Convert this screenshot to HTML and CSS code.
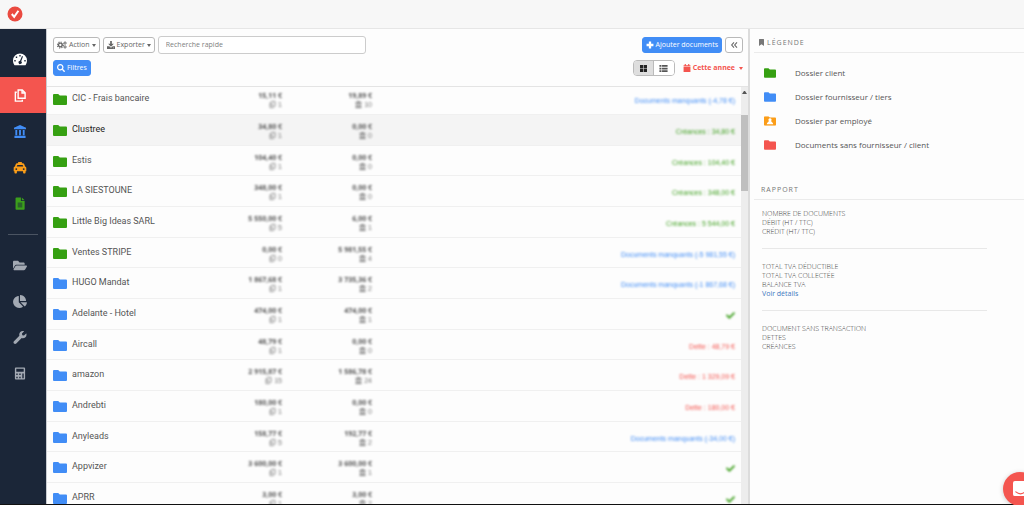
FILE: index.html
```html
<!DOCTYPE html>
<html lang="fr">
<head>
<meta charset="utf-8">
<title>Documents</title>
<link rel="stylesheet" href="styles.css">
</head>
<body>
<svg class="defs" aria-hidden="true">
  <symbol id="folder" viewBox="0 0 14 11"><path d="M1 0h4.2l1.6 1.5H13a1 1 0 0 1 1 1V10a1 1 0 0 1-1 1H1a1 1 0 0 1-1-1V1a1 1 0 0 1 1-1z"/></symbol>
  <symbol id="check" viewBox="0 0 512 512"><path d="M173.898 439.404l-166.4-166.4c-9.997-9.997-9.997-26.206 0-36.204l36.203-36.204c9.997-9.998 26.207-9.998 36.204 0L192 312.69 432.095 72.596c9.997-9.997 26.207-9.997 36.204 0l36.203 36.204c9.997 9.997 9.997 26.206 0 36.204l-294.4 294.401c-9.998 9.997-26.207 9.997-36.204-.001z"/></symbol>
  <symbol id="clip" viewBox="0 0 14 14"><path d="M2 4l3-3h7v9l-3 3H2zM5 4v5h4" fill="none" stroke="currentColor" stroke-width="1.6"/></symbol>
  <symbol id="bank" viewBox="0 0 14 14"><path d="M7 0l6.500 3v1.500H.5V3zM2 5.500h2V11H2zM6 5.500h2V11H6zM10 5.500h2V11h-2zM1 11.500h12V14H1z"/></symbol>
</svg>

<header class="topbar">
  <a class="logo" href="#" aria-label="Accueil">
    <svg viewBox="0 0 16 16"><circle cx="8" cy="8" r="7.500" fill="#ea4a40"/><path d="M4.800 8l2.400 2.800L11.400 4.800" fill="none" stroke="#fff" stroke-width="2"/></svg>
  </a>
</header>

<div class="layout">
  <nav class="sidebar">
    <a class="nav white" href="#" aria-label="Tableau de bord"><svg viewBox="0 0 14 12"><path fill-rule="evenodd" d="M7 0a7 7 0 0 1 7 7c0 1.600-.4 3-1.200 4.300-.2.400-.5.500-.9.500H2.100c-.4 0-.7-.1-.9-.5A7.500 7.500 0 0 1 0 7a7 7 0 0 1 7-7zM6.300 1.500v1.400h1.400V1.500zM2.800 3v1.400h1.400V3zM1.300 6.500v1.400h1.400V6.500zM11.300 6.500v1.400h1.400V6.500zM9 2.600L7 7.300a1.600 1.600 0 1 0 1.200.4l1.800-4.700z"/></svg></a>
    <a class="nav white active" href="#" aria-label="Documents"><svg viewBox="0 0 14 14"><g fill="none" stroke="currentColor" stroke-width="1.500"><path d="M5 1h4.500l3 3v6H5zM9.200 1.200v3.100h3.200M3.500 3.500H2V13h7.500v-1.500"/></g></svg></a>
    <a class="nav blue" href="#" aria-label="Banque"><svg viewBox="0 0 14 14"><use href="#bank"/></svg></a>
    <a class="nav orange" href="#" aria-label="Déplacements"><svg viewBox="0 0 14 14"><path fill-rule="evenodd" d="M5 1h4v1.500h1.200c.7 0 1.100.4 1.400 1L12.500 6c.8.200 1.300.8 1.300 1.600V11H13v1.500a.9.900 0 0 1-.9.900h-.9a.9.900 0 0 1-.9-.9V11H3.700v1.500a.9.900 0 0 1-.9.900h-.9a.9.900 0 0 1-.9-.9V11H.2V7.600C.2 6.800.7 6.200 1.500 6l.9-2.500c.3-.6.700-1 1.400-1H5zM4.200 4.200L3.500 6h7l-.7-1.800zM3 7.700a1 1 0 1 0 0 2 1 1 0 0 0 0-2zM11 7.700a1 1 0 1 0 0 2 1 1 0 0 0 0-2z"/></svg></a>
    <a class="nav green" href="#" aria-label="Factures"><svg viewBox="0 0 14 14"><path fill-rule="evenodd" d="M3 .5h5v3.700h4V13a.8.800 0 0 1-.8.800H3a.8.800 0 0 1-.8-.8V1.300A.8.800 0 0 1 3 .5zM9 .5l3 2.900H9zM4.500 6.200v.9h5v-.9zM4.500 8.200v.9h5v-.9zM4.500 10.200v.9h5v-.9z"/></svg></a>
    <hr class="nav-rule">
    <a class="nav" href="#" aria-label="Dossiers"><svg viewBox="0 0 576 512"><path d="M572.694 292.093L500.270 416.248A63.997 63.997 0 0 1 444.989 448H45.025c-18.523 0-30.064-20.093-20.731-36.093l72.424-124.155A64 64 0 0 1 152 256h399.964c18.523 0 30.064 20.093 20.730 36.093zM152 224h328v-48c0-26.510-21.490-48-48-48H272l-64-64H48C21.490 64 0 85.490 0 112v278.046l69.077-118.418C86.214 242.250 117.989 224 152 224z"/></svg></a>
    <a class="nav" href="#" aria-label="Statistiques"><svg viewBox="0 0 544 512"><path d="M527.790 288H290.500l158.030 158.030c6.040 6.040 15.980 6.530 22.190.680 38.700-36.460 65.320-85.610 73.130-140.860 1.340-9.460-6.510-17.850-16.060-17.850zm-15.830-64.800C503.720 103.740 408.260 8.280 288.800.040 279.680-.590 272 7.100 272 16.240V240h223.770c9.140 0 16.820-7.680 16.190-16.800zM224 288V50.710c0-9.550-8.390-17.400-17.840-16.060C86.990 51.490-4.100 155.600.140 280.370 4.500 408.510 114.830 513.590 243.030 511.980c50.400-.630 96.970-16.870 135.260-44.030 7.900-5.600 8.420-17.230 1.570-24.080L224 288z"/></svg></a>
    <a class="nav" href="#" aria-label="Réglages"><svg viewBox="0 0 512 512"><path d="M507.730 109.100c-2.240-9.030-13.540-12.090-20.120-5.510l-74.360 74.360-67.880-11.310-11.310-67.880 74.360-74.360c6.620-6.620 3.430-17.900-5.660-20.160-47.380-11.740-99.550.910-136.580 37.930-39.640 39.640-50.550 97.100-34.050 147.200L18.740 402.760c-24.990 24.990-24.990 65.510 0 90.500 24.990 24.990 65.510 24.990 90.500 0l213.210-213.210c50.120 16.710 107.470 5.680 147.370-34.220 37.070-37.070 49.700-89.320 37.910-136.730z"/></svg></a>
    <a class="nav" href="#" aria-label="Calculatrice"><svg viewBox="0 0 14 14"><path fill-rule="evenodd" d="M2.500 .5h9a1 1 0 0 1 1 1v11a1 1 0 0 1-1 1h-9a1 1 0 0 1-1-1v-11a1 1 0 0 1 1-1zM3 2v3h8V2zM3 7v1.500h1.500V7zM6.200 7v1.500h1.500V7zM9.500 7v5H11V7zM3 10.500V12h1.500v-1.500zM6.200 10.500V12h1.500v-1.500z"/></svg></a>
  </nav>

  <main class="main">
    <div class="toolbar">
      <div class="bar">
        <button class="btn" type="button"><svg class="ico" viewBox="0 0 18 14"><g fill="none" stroke="currentColor"><circle cx="6" cy="7" r="3.400" stroke-width="2.600"/><circle cx="6" cy="7" r="5.400" stroke-width="2" stroke-dasharray="2.100 2.140"/><circle cx="14.500" cy="3.500" r="2" stroke-width="1.800"/><circle cx="14.500" cy="10.500" r="2" stroke-width="1.800"/></g></svg>Action<i class="caret"></i></button>
        <button class="btn" type="button"><svg class="ico small" viewBox="0 0 14 14"><path fill-rule="evenodd" d="M5.500 0h3v5H12L7 10 2 5h3.500zM0 9h4l3 3 3-3h4v5H0zM10.500 11.500v1h1v-1z"/></svg>Exporter<i class="caret"></i></button>
        <input class="search" type="text" aria-label="Recherche rapide" placeholder="Recherche rapide">
        <button class="btn primary end" type="button"><svg class="ico small" viewBox="0 0 14 14"><path d="M5 1h4v4h4v4H9v4H5V9H1V5h4z"/></svg>Ajouter documents</button>
        <button class="btn fold" type="button" aria-label="Replier"><svg viewBox="0 0 12 12"><path d="M6 2L2.500 6 6 10M10.500 2L7 6l3.500 4" fill="none" stroke="currentColor" stroke-width="1.600"/></svg></button>
      </div>
      <div class="bar second">
        <button class="btn primary" type="button"><svg class="ico small" viewBox="0 0 512 512"><path d="M505 442.700L405.300 343c-4.500-4.500-10.600-7-17-7H372c27.600-35.300 44-79.700 44-128C416 93.100 322.900 0 208 0S0 93.100 0 208s93.100 208 208 208c48.300 0 92.700-16.400 128-44v16.300c0 6.400 2.500 12.500 7 17l99.700 99.700c9.400 9.400 24.600 9.400 33.900 0l28.300-28.300c9.400-9.400 9.400-24.600.1-34zM208 336c-70.700 0-128-57.200-128-128 0-70.700 57.200-128 128-128 70.700 0 128 57.200 128 128 0 70.700-57.200 128-128 128z"/></svg>Filtres</button>
        <div class="toggle end">
          <button class="on" type="button" aria-label="Grille"><svg viewBox="0 0 14 12"><path d="M1 0h5.500v5.500H1zM7.500 0H13v5.500H7.500zM1 6.500h5.500V12H1zM7.500 6.500H13V12H7.500z"/></svg></button>
          <button type="button" aria-label="Liste"><svg viewBox="0 0 14 12"><path d="M0 0h3.500v3H0zM0 4.500h3.500v3H0zM0 9h3.500v3H0zM4.500 0H14v3H4.500zM4.500 4.500H14v3H4.500zM4.500 9H14v3H4.500z"/></svg></button>
        </div>
        <button class="period" type="button"><svg class="ico small" viewBox="0 0 14 14"><path d="M3 0h2v2h4V0h2v2h2v2.500H1V2h2zM1 5.300h12V14H1z"/></svg>Cette annee<i class="caret"></i></button>
      </div>
    </div>

    <div class="list">
      <table class="rows">
        <tbody>
        <tr><td class="name"><svg class="client"><use href="#folder"/></svg>CIC - Frais bancaire</td><td class="sum"><b>15,11 €</b><small><svg><use href="#clip"/></svg>1</small></td><td class="sum"><b>19,89 €</b><small><svg><use href="#bank"/></svg>10</small></td><td class="state blue"><span>Documents manquants (-4,78 €)</span></td></tr>
        <tr class="hover"><td class="name"><svg class="client"><use href="#folder"/></svg>Clustree</td><td class="sum"><b>34,80 €</b><small><svg><use href="#clip"/></svg>1</small></td><td class="sum"><b>0,00 €</b><small><svg><use href="#bank"/></svg>0</small></td><td class="state green"><span>Créances : 34,80 €</span></td></tr>
        <tr><td class="name"><svg class="client"><use href="#folder"/></svg>Estis</td><td class="sum"><b>104,40 €</b><small><svg><use href="#clip"/></svg>1</small></td><td class="sum"><b>0,00 €</b><small><svg><use href="#bank"/></svg>0</small></td><td class="state green"><span>Créances : 104,40 €</span></td></tr>
        <tr><td class="name"><svg class="client"><use href="#folder"/></svg>LA SIESTOUNE</td><td class="sum"><b>348,00 €</b><small><svg><use href="#clip"/></svg>1</small></td><td class="sum"><b>0,00 €</b><small><svg><use href="#bank"/></svg>0</small></td><td class="state green"><span>Créances : 348,00 €</span></td></tr>
        <tr><td class="name"><svg class="client"><use href="#folder"/></svg>Little Big Ideas SARL</td><td class="sum"><b>5 550,00 €</b><small><svg><use href="#clip"/></svg>5</small></td><td class="sum"><b>6,00 €</b><small><svg><use href="#bank"/></svg>1</small></td><td class="state green"><span>Créances : 5 544,00 €</span></td></tr>
        <tr><td class="name"><svg class="client"><use href="#folder"/></svg>Ventes STRIPE</td><td class="sum"><b>0,00 €</b><small><svg><use href="#clip"/></svg>0</small></td><td class="sum"><b>5 981,55 €</b><small><svg><use href="#bank"/></svg>4</small></td><td class="state blue"><span>Documents manquants (-5 981,55 €)</span></td></tr>
        <tr><td class="name"><svg class="vendor"><use href="#folder"/></svg>HUGO Mandat</td><td class="sum"><b>1 867,68 €</b><small><svg><use href="#clip"/></svg>1</small></td><td class="sum"><b>3 735,36 €</b><small><svg><use href="#bank"/></svg>2</small></td><td class="state blue"><span>Documents manquants (-1 867,68 €)</span></td></tr>
        <tr><td class="name"><svg class="vendor"><use href="#folder"/></svg>Adelante - Hotel</td><td class="sum"><b>474,00 €</b><small><svg><use href="#clip"/></svg>1</small></td><td class="sum"><b>474,00 €</b><small><svg><use href="#bank"/></svg>1</small></td><td class="state green"><svg role="img" aria-label="Complet"><use href="#check"/></svg></td></tr>
        <tr><td class="name"><svg class="vendor"><use href="#folder"/></svg>Aircall</td><td class="sum"><b>48,79 €</b><small><svg><use href="#clip"/></svg>1</small></td><td class="sum"><b>0,00 €</b><small><svg><use href="#bank"/></svg>0</small></td><td class="state red"><span>Dette : 48,79 €</span></td></tr>
        <tr><td class="name"><svg class="vendor"><use href="#folder"/></svg>amazon</td><td class="sum"><b>2 915,87 €</b><small><svg><use href="#clip"/></svg>15</small></td><td class="sum"><b>1 586,78 €</b><small><svg><use href="#bank"/></svg>24</small></td><td class="state red"><span>Dette : 1 329,09 €</span></td></tr>
        <tr><td class="name"><svg class="vendor"><use href="#folder"/></svg>Andrebti</td><td class="sum"><b>180,00 €</b><small><svg><use href="#clip"/></svg>1</small></td><td class="sum"><b>0,00 €</b><small><svg><use href="#bank"/></svg>0</small></td><td class="state red"><span>Dette : 180,00 €</span></td></tr>
        <tr><td class="name"><svg class="vendor"><use href="#folder"/></svg>Anyleads</td><td class="sum"><b>158,77 €</b><small><svg><use href="#clip"/></svg>5</small></td><td class="sum"><b>192,77 €</b><small><svg><use href="#bank"/></svg>2</small></td><td class="state blue"><span>Documents manquants (-34,00 €)</span></td></tr>
        <tr><td class="name"><svg class="vendor"><use href="#folder"/></svg>Appvizer</td><td class="sum"><b>3 600,00 €</b><small><svg><use href="#clip"/></svg>1</small></td><td class="sum"><b>3 600,00 €</b><small><svg><use href="#bank"/></svg>1</small></td><td class="state green"><svg role="img" aria-label="Complet"><use href="#check"/></svg></td></tr>
        <tr><td class="name"><svg class="vendor"><use href="#folder"/></svg>APRR</td><td class="sum"><b>3,00 €</b><small><svg><use href="#clip"/></svg>1</small></td><td class="sum"><b>3,00 €</b><small><svg><use href="#bank"/></svg>2</small></td><td class="state green"><svg role="img" aria-label="Complet"><use href="#check"/></svg></td></tr>
        </tbody>
      </table>
      <div class="track"><i class="up"></i><div class="thumb"></div></div>
    </div>
  </main>

  <aside class="panel">
    <h2 class="title"><svg viewBox="0 0 10 14"><path d="M1 0h8a1 1 0 0 1 1 1v13l-5-3.500L0 14V1a1 1 0 0 1 1-1z"/></svg>LÉGENDE</h2>
    <ul class="legend">
      <li><svg class="client"><use href="#folder"/></svg>Dossier client</li>
      <li><svg class="vendor"><use href="#folder"/></svg>Dossier fournisseur / tiers</li>
      <li><svg class="staff" viewBox="0 0 14 11"><use href="#folder"/><path fill="#fff" d="M7 2.200a1.800 1.800 0 0 1 1.200 3.200c.2 1 2.300 1.600 2.600 3.800H3.200C3.500 7 5.600 6.400 5.800 5.400A1.800 1.800 0 0 1 7 2.200z"/></svg>Dossier par employé</li>
      <li><svg class="orphan"><use href="#folder"/></svg>Documents sans fournisseur / client</li>
    </ul>
    <h2 class="title report">RAPPORT</h2>
    <div class="figures">
      <p>NOMBRE DE DOCUMENTS<br>DÉBIT (HT / TTC)<br>CRÉDIT (HT/ TTC)</p>
      <p>TOTAL TVA DÉDUCTIBLE<br>TOTAL TVA COLLECTÉE<br>BALANCE TVA<br><a href="#">Voir détails</a></p>
      <p>DOCUMENT SANS TRANSACTION<br>DETTES<br>CRÉANCES</p>
    </div>
  </aside>
</div>
<footer class="edge"></footer>
<button class="chat" type="button" aria-label="Discussion"><svg viewBox="0 0 16 18"><path d="M2 0h12a2 2 0 0 1 2 2v16l-4-2H2a2 2 0 0 1-2-2V2a2 2 0 0 1 2-2z" fill="#fff"/><path d="M3 11.500c3 2.500 7 2.500 10 0" fill="none" stroke="#f4554f" stroke-width="1.200" stroke-linecap="round"/></svg></button>
</body>
</html>
```

FILE: styles.css
```css
* { box-sizing: border-box; }

body {
  margin: 0;
  height: 100vh;
  display: flex;
  flex-direction: column;
  overflow: hidden;
  background: #fdfdfd;
  color: #555;
  font: 8px/12px "Open Sans", "Noto Sans", sans-serif;
}

button, input { font: inherit; font-size: 7px; color: inherit; }
button { cursor: pointer; }
svg { fill: currentColor; flex: none; }
.defs { position: absolute; width: 0; height: 0; }

.blue { color: #418df6; }
.green { color: #3c9f1c; }
.orange { color: #fb9d18; }
.red { color: #f4554f; }
.white { color: #fff; }

.topbar {
  flex: none;
  height: 29px;
  padding: 0 7px;
  display: flex;
  align-items: center;
  background: #f7f7f7;
  border-bottom: 1px solid #e6e6e6;
}
.logo { display: flex; }
.logo svg { width: 16px; height: 16px; }

.layout { flex: 1; min-height: 0; display: flex; }

.sidebar {
  flex: none;
  width: 47px;
  padding-top: 12px;
  background: #1b2638;
  border-right: 1px solid #c9ccd1;
}
.nav {
  height: 36px;
  padding-right: 6px;
  display: flex;
  align-items: center;
  justify-content: center;
  color: #a3a9b3;
}
.nav svg { width: 14px; height: 13px; }
.nav.blue { color: #418df6; }
.nav.orange { color: #fb9d18; }
.nav.green { color: #3c9f1c; }
.nav.white { color: #fff; }
.nav.active { background: #f4554f; }
.nav-rule { margin: 13px 8px 12px; border: 0; border-top: 1px solid #4b5462; }

.main {
  flex: 1;
  min-width: 0;
  display: flex;
  flex-direction: column;
  border-right: 2px solid #dcdcdc;
}

.toolbar {
  flex: none;
  height: 58px;
  padding: 7px 5px 0 6px;
  border-bottom: 1px solid #e4e4e4;
}
.bar { display: flex; align-items: center; gap: 3px; }
.second { margin-top: 6px; }
.end { margin-left: auto; }

.btn {
  height: 16px;
  padding: 0 3px;
  display: flex;
  align-items: center;
  gap: 2px;
  border: 1px solid #b9b9b9;
  border-radius: 3px;
  background: #fff;
  color: #666;
  white-space: nowrap;
}
.primary { background: #418df6; border-color: #418df6; color: #fff; }
.fold { width: 18px; justify-content: center; }
.fold svg { width: 8px; height: 8px; }
.ico { width: 10px; height: 8px; }
.small { width: 8px; height: 8px; }
.caret {
  border: 2px solid transparent;
  border-top: 3px solid currentColor;
  border-bottom: 0;
}
.search {
  width: 208px;
  height: 18px;
  padding: 0 7px 1px;
  border: 1px solid #ccc;
  border-radius: 3px;
  background: #fff;
}
.search::placeholder { color: #808080; opacity: 1; }

.toggle { display: flex; margin-right: 5px; border: 1px solid #bbb; border-radius: 4px; overflow: hidden; }
.toggle button {
  width: 20px;
  height: 14px;
  padding: 0;
  display: flex;
  align-items: center;
  justify-content: center;
  border: 0;
  background: #fff;
}
.toggle .on { background: #dedede; border-right: 1px solid #bbb; color: #222; }
.toggle svg { width: 9px; height: 7px; }
.period {
  padding: 0;
  display: flex;
  align-items: center;
  gap: 2px;
  border: 0;
  background: none;
  color: #f4554f;
  font-weight: 700;
}
.period .caret { margin-left: 2px; }

.list { flex: 1; min-height: 0; display: flex; align-items: flex-start; overflow: hidden; }
.rows {
  flex: 1;
  margin-top: -4px;
  border-collapse: collapse;
  table-layout: fixed;
  font-family: "Liberation Sans", Arial, sans-serif;
}
.rows tr { height: 31px; border-bottom: 1px solid #f0f0f0; }
.rows tr:nth-child(3n) { height: 30px; }
.rows .hover { background: #f4f4f4; }
.hover .name { color: #222; }
.rows td { padding: 0; vertical-align: middle; white-space: nowrap; }
.name { width: 145px; font-family: Roboto, "Liberation Sans", sans-serif; font-size: 9px; }
.name svg { width: 14px; height: 11px; margin: 0 5px 0 6px; vertical-align: -4px; }
.client { color: #36a012; }
.vendor { color: #418df6; }
.staff { color: #fb9d18; }
.orphan { color: #f4554f; }

.sum { width: 90px; text-align: right; filter: blur(1px); }
.rows .sum { padding-top: 3px; }
.sum b, .sum small { display: block; font-size: 7px; line-height: 9px; }
.sum b { font-family: "Open Sans", sans-serif; }
.sum small { color: #777; }
.sum small svg { width: 7px; height: 7px; margin-right: 2px; vertical-align: -1px; }
.state { text-align: right; font-size: 7px; }
.rows .state { padding: 5px 6px 0 0; }
.state span { filter: blur(1px); }
.state svg { width: 9px; height: 9px; vertical-align: -2px; filter: blur(1px); }

.track { flex: none; align-self: stretch; width: 7px; background: #ededed; }
.up {
  display: block;
  margin: 4px 1px 21px;
  border: 2px solid transparent;
  border-top: 0;
  border-bottom: 3px solid #555;
}
.thumb { height: 76px; background: #bfbfbf; }

.panel { flex: none; width: 274px; padding-left: 4px; }
.title {
  margin: 0;
  height: 24px;
  padding: 4px 5px 0;
  display: flex;
  align-items: center;
  gap: 3px;
  border-bottom: 1px solid #ebebeb;
  color: #777;
  font-size: 7px;
  font-weight: 400;
  letter-spacing: 1px;
}
.title svg { width: 5px; height: 7px; }
.legend { margin: 8px 0 19px; padding: 0 10px; list-style: none; }
.legend li { height: 24px; display: flex; align-items: center; gap: 19px; }
.legend svg { width: 12px; height: 10px; }
.report { padding-left: 7px; }
.figures { padding: 0 37px 0 8px; font-size: 7px; font-weight: 300; line-height: 9px; color: #444; }
.figures p { margin: 0; padding: 9px 0 12px; border-bottom: 1px solid #e8e8e8; }
.figures p + p { padding-top: 13px; }
.figures p:last-child { border: 0; }
.figures a { color: #4078c0; font-weight: 400; text-decoration: none; }

.edge { flex: none; height: 1px; background: #111; }

.chat {
  position: fixed;
  right: -13px;
  bottom: -1px;
  width: 34px;
  height: 34px;
  padding: 0;
  display: flex;
  align-items: center;
  justify-content: center;
  border: 0;
  border-radius: 50%;
  background: #f4554f;
  box-shadow: 0 1px 5px #0003;
}
.chat svg { width: 15px; height: 17px; }
```
